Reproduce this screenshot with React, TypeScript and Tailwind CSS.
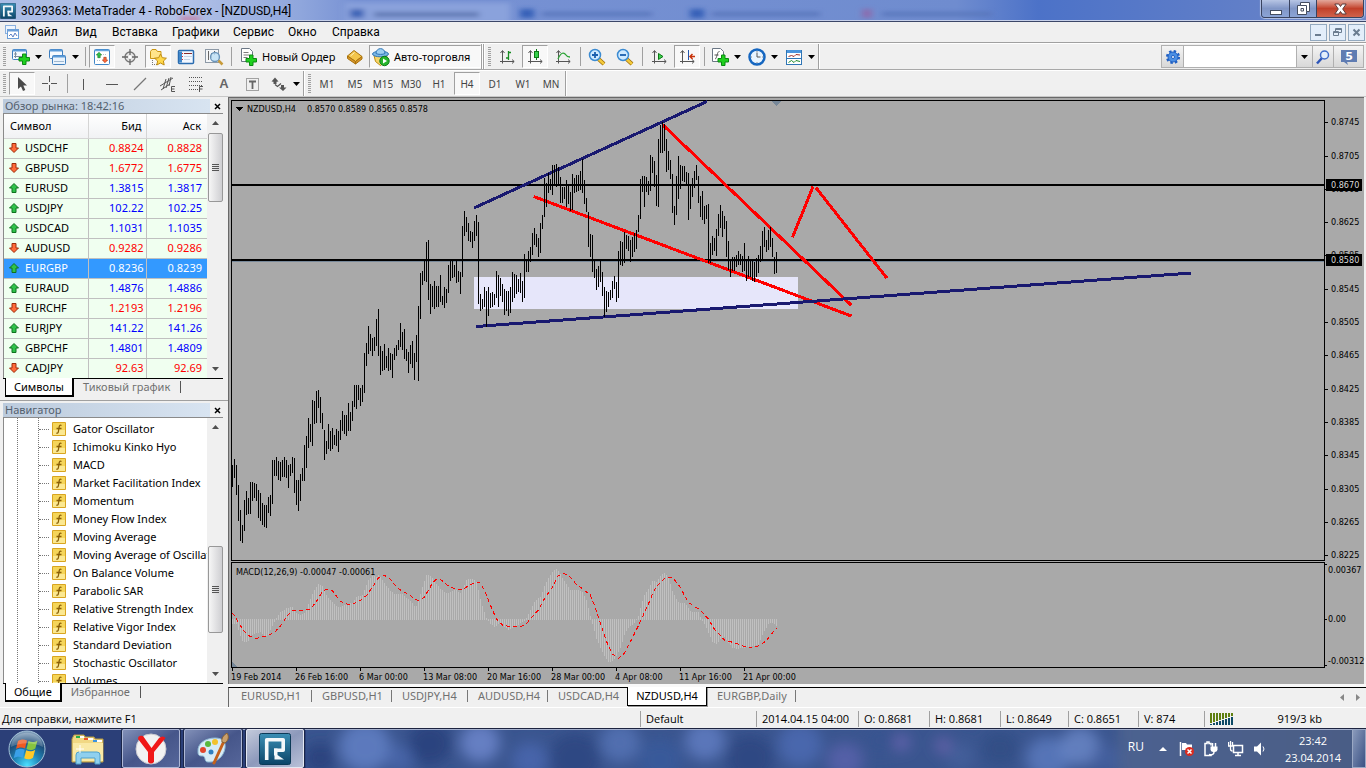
import type { ReactNode } from "react";

/* ---------- market data ---------- */

type Quote = [symbol: string, bid: string, ask: string, up: boolean];

const quotes: Quote[] = [
  ["USDCHF", "0.8824", "0.8828", false],
  ["GBPUSD", "1.6772", "1.6775", false],
  ["EURUSD", "1.3815", "1.3817", true],
  ["USDJPY", "102.22", "102.25", true],
  ["USDCAD", "1.1031", "1.1035", true],
  ["AUDUSD", "0.9282", "0.9286", false],
  ["EURGBP", "0.8236", "0.8239", true],
  ["EURAUD", "1.4876", "1.4886", true],
  ["EURCHF", "1.2193", "1.2196", false],
  ["EURJPY", "141.22", "141.26", true],
  ["GBPCHF", "1.4801", "1.4809", true],
  ["CADJPY", "92.63", "92.69", false],
];

const indicators = [
  "Gator Oscillator", "Ichimoku Kinko Hyo", "MACD", "Market Facilitation Index", "Momentum",
  "Money Flow Index", "Moving Average", "Moving Average of Oscillator", "On Balance Volume",
  "Parabolic SAR", "Relative Strength Index", "Relative Vigor Index", "Standard Deviation",
  "Stochastic Oscillator", "Volumes",
];

/* High-low bars, two pixels apart, in thirds of a pixel below the origin of each run. */
const barRuns = [
  {
    top: 380,
    data:
      "255-320 237-294 255-345 315-422 390-483 435-488 360-453 333-404 354-402 306-402 306-362 308-355 312-362 330-414 339-422 369-435 375-440 375-443 351-399 345-408 240-372 240-288 231-288 243-299 246-303 240-291 231-291 240-294 255-323 252-288 231-279 234-339 300-375 300-392 282-363 264-303 195-303 168-264 114-204 132-186 60-197 63-131 33-129 30-84 51-129 99-147 150-240 183-222 132-207 153-213 144-207 165-195 147-198 153-215 120-180 93-153 105-162 105-168 69-153 96-153 63-123 15-81 15-87 15-60 24-78 15-66",
  },
  {
    top: 95,
    data:
      "773-894 743-813 693-777 717-768 729-783 726-768 672-753 642-783 753-840 768-828 747-825 783-819 759-828 774-825 777-849 759-795 750-783 735-765 684-756 711-765 702-792 762-798 771-834 750-807 738-819 774-854 720-801 633-858 534-671 528-570 498-558 441-561 435-615 567-657 573-636 558-642 573-636 573-636 540-621 603-630 576-639 582-624 510-594 498-558 498-549 510-546 498-564 528-561 531-597 393-546 348-423 366-411 384-438 408-441 411-459 378-438 360-423 381-627 597-648 612-642 576-636 588-696 576-663 594-639 591-636 597-630 528-609 540-636 549-603 567-621 582-660 588-648 588-663 576-654 531-621 537-609 540-597 552-591 534-594 558-621 477-609 498-531 468-531 456-501 414-480 399-450 417-456 429-486 384-474 360-402 249-366 264-336 234-294 252-285 210-300 210-270 207-276 216-273 246-324 276-324 276-312 255-336 270-327 291-348 237-345 249-294 240-291 240-288 228-285 192-294 255-327 309-351 351-456 417-486 420-531 492-549 522-585 513-576 498-561 531-603 576-666 588-651 591-636 585-615 558-609 543-582 561-621 468-609 438-510 441-513 411-504 420-462 423-468 435-501 426-486 414-471 405-462 360-411 252-372 243-291 243-336 246-291 258-300 180-288 186-234 198-276 240-333 132-336 90-174 81-174 87-168 132-231 168-225 195-252 237-354 333-390 243-360 183-312 210-282 213-258 213-261 231-270 234-375 273-342 249-306 228-279 210-255 243-324 303-366 288-375 333-387 330-372 327-504 444-504 423-480 429-468 402-483 357-423 330-399 348-426 363-402 378-486 438-525 492-546 486-528 486-528 480-516 468-510 477-510 483-531 444-528 498-558 483-546 495-546 498-558 501-561 489-546 480-534 453-501 408-492 396-456 435-471 405-465 396-456 429-486 486-537 471-534",
  },
];

const bars = barRuns
  .flatMap((run) =>
    run.data.split(" ").map((pair) => pair.split("-").map((v) => Math.round(run.top + Number(v) / 3))),
  )
  .map(([high, low], i) => ({ x: 232 + i * 2, high, low }));

type Point = [number, number];

const parsePoints = (left: number, top: number, text: string): Point[] =>
  text.split(" ").map((p) => {
    const [x, y] = p.split(":").map(Number);
    return [left + x / 3, top + y / 3];
  });

const histogram: Point[] = [
  ...parsePoints(228, 380, "13:732 25:732 31:753 43:786 55:786 61:783 67:768 79:760 97:757 109:768 121:765 130:740 139:725 145:711 157:696 175:684 193:681 205:700 217:705 229:700 241:668 253:640 265:618 271:609 283:620 295:648 313:668 331:682 349:675 361:672 373:668 385:650 403:645 409:628 421:597 433:588 445:590 451:585 463:600 475:618 487:633 499:642 523:642 535:655 547:663 559:678 565:678 571:660 583:618 595:582 613:594 625:612 637:628 655:640 679:628 697:640 715:597 733:597 745:606 757:663 775:717 787:732 799:741 811:732 829:741 841:750 859:741 877:729 889:723 895:711 907:687 919:663 937:650"),
  ...parsePoints(540, 555, "13:90 25:66 37:50 49:41 61:60 73:78 91:105 109:105 127:110 139:138 151:186 157:210 169:255 181:280 193:305 205:321 217:318 229:300 241:276 253:237 265:216 283:204 295:180 301:153 313:117 325:99 337:75 349:80 361:60 373:54 385:70 397:111 415:144 433:144 451:170 463:172 475:170 481:190 493:207 505:237 517:262 529:267 541:250 553:246 565:264 577:279 589:282 625:276 655:270 667:237 679:216 685:204 697:204 709:213"),
];

const signal: Point[] = [
  ...parsePoints(228, 380, "13:698 25:717 49:755 67:770 85:775 121:766 139:758 157:738 175:712 193:690 229:690 247:688 265:665 283:635 295:628 313:632 337:664 361:674 379:670 397:661 415:647 433:622 451:594 469:586 487:597 505:620 523:635 541:641 559:657 571:661 589:652 613:610 625:598 640:600 661:618 685:628 703:629 727:614 745:605 757:609 769:630 787:675 805:717 823:735 850:741 877:740 895:731 913:710 931:690"),
  ...parsePoints(540, 555, "1:155 13:132 37:97 55:62 73:55 91:67 109:88 127:101 151:120 163:150 181:205 199:258 217:297 235:310 253:295 271:261 301:200 325:147 343:105 361:82 379:66 397:68 415:88 445:141 463:155 481:165 505:192 523:222 553:255 589:265 610:273 637:278 661:271 679:257 697:234 709:220"),
];

const valueAt = (points: Point[], x: number) => {
  const next = points.findIndex((p) => p[0] >= x);
  if (next <= 0) return points[next === 0 ? 0 : points.length - 1][1];
  const [x0, y0] = points[next - 1];
  const [x1, y1] = points[next];
  return y0 + ((y1 - y0) * (x - x0)) / (x1 - x0);
};

const ZERO = 619;
const macdBars = bars.map(({ x }) => {
  const y = Math.round(valueAt(histogram, x));
  return y < ZERO ? { x, y, h: ZERO + 1 - y } : { x, y: ZERO, h: Math.max(1, y - ZERO) };
});

const priceTicks: [string, number][] = [
  ["0.8745", 122], ["0.8705", 156], ["0.8665", 189], ["0.8625", 222], ["0.8585", 255], ["0.8545", 289],
  ["0.8505", 322], ["0.8465", 355], ["0.8425", 389], ["0.8385", 422], ["0.8345", 455], ["0.8305", 489],
  ["0.8265", 522], ["0.8225", 555],
];

const dateTicks: [string, number][] = [
  ["19 Feb 2014", 232], ["26 Feb 16:00", 296], ["6 Mar 00:00", 360], ["13 Mar 08:00", 424],
  ["20 Mar 16:00", 488], ["28 Mar 00:00", 552], ["4 Apr 08:00", 616], ["11 Apr 16:00", 680],
  ["21 Apr 00:00", 744],
];

/* ---------- icons ---------- */

const Svg = ({ size = 20, children }: { size?: number; children: ReactNode }) => (
  <svg width={size} height={size} viewBox={`0 0 ${size} ${size}`} className="shrink-0" aria-hidden="true">
    {children}
  </svg>
);

const Plus = ({ x, y }: { x: number; y: number }) => (
  <path
    transform={`translate(${x} ${y})`}
    d="M4 0.5h3.5v3.5H11v3.5H7.500v3.500H4V7.500H0.500V4H4z"
    fill="#1fd01f"
    stroke="#0a8a12"
  />
);

const NewChartIcon = () => (
  <Svg>
    <rect x="1.500" y="2.500" width="14" height="10" rx="1" fill="#f5faff" stroke="#3f7fbf" />
    <path d="M2 3.500h13" stroke="#5b9bd8" strokeWidth="2" />
    <path d="M4.500 5v6M3 7h3M3 9.500h10" stroke="#7d8ea0" fill="none" />
    <Plus x={7.500} y={6.500} />
  </Svg>
);

const ProfilesIcon = () => (
  <Svg>
    <rect x="1.500" y="2.500" width="13" height="9" rx="1" fill="#f5faff" stroke="#3f7fbf" />
    <path d="M2 3.500h12" stroke="#5b9bd8" strokeWidth="2" />
    <rect x="4.500" y="8.500" width="13" height="9" rx="1" fill="#eaf3fc" stroke="#3f7fbf" />
    <path d="M5 9.500h12" stroke="#5b9bd8" strokeWidth="2" />
    <path d="M6 14.500h10" stroke="#9fb8d0" />
  </Svg>
);

const UpArrow = () => (
  <path d="M5 0.500L9.500 5H7v4.500H3V5H.5z" fill="#2fc24a" stroke="#11711f" />
);
const DownArrow = () => (
  <path d="M5 9.500L9.500 5H7V.5H3V5H.5z" fill="#ff6a3a" stroke="#9c2d0d" />
);

const MarketWatchIcon = () => (
  <Svg>
    <rect x="2.500" y="2.500" width="15" height="15" rx="1" fill="#fff" stroke="#3f86c8" />
    <path d="M3 3.500h14" stroke="#66a6e0" strokeWidth="1.500" />
    <g transform="translate(4 5) scale(.6)"><UpArrow /></g>
    <g transform="translate(10 10) scale(.6)"><DownArrow /></g>
    <path d="M11 7.500h4M5 13.500h4" stroke="#b8c4d0" strokeDasharray="1 1" />
  </Svg>
);

const TargetIcon = () => (
  <Svg>
    <circle cx="10" cy="10" r="5" fill="#e4e4e4" stroke="#777" strokeWidth="1.300" />
    <circle cx="10" cy="10" r="1.500" fill="#fff" />
    <path d="M10 2v6M10 12v6M2 10h6M12 10h6" stroke="#666" strokeWidth="1.300" />
  </Svg>
);

const NavigatorIcon = () => (
  <Svg>
    <path d="M2.500 4.500L4 2.500h4l1.500 2H13v7H2.500z" fill="#ffe58a" stroke="#c99512" />
    <path d="M4.500 13v5M6 17.500h3" stroke="#777" strokeDasharray="1 1" />
    <path d="M12.500 7l1.800 3.700 4.100.5-3 2.800.8 4-3.700-2-3.700 2 .8-4-3-2.800 4.100-.5z" fill="#ffd84a" stroke="#c08c10" />
  </Svg>
);

const TerminalIcon = () => (
  <Svg>
    <rect x="2.500" y="3.500" width="15" height="13" rx="1" fill="#f2f7ff" stroke="#2a6cb0" strokeWidth="1.500" />
    <path d="M3 4.500h3v11H3z" fill="#3f86c8" />
    <path d="M8 6.500h8" stroke="#8a2b2b" />
    <path d="M8 9.500h8M8 12.500h6" stroke="#c5d4e6" />
    <path d="M6.500 6v9" stroke="#d33" strokeDasharray="1 2" />
  </Svg>
);

const TesterIcon = () => (
  <Svg>
    <rect x="1.500" y="2.500" width="13" height="13" fill="#f4f6f8" stroke="#8d99a6" />
    <path d="M4.500 4v9M7.500 6v5M10.500 4v4" stroke="#666" />
    <circle cx="11" cy="10" r="4.500" fill="#bfe0f6" fillOpacity=".85" stroke="#6b95bb" strokeWidth="1.300" />
    <path d="M14.500 13.500l4 4" stroke="#c89b3a" strokeWidth="2.500" />
  </Svg>
);

const OrderIcon = () => (
  <Svg>
    <path d="M2.500 1.500h8l3 3v10h-11z" fill="#fff" stroke="#6b7785" />
    <path d="M4.500 5.500h5M4.500 8h6M4.500 10.500h4" stroke="#7c7c7c" />
    <Plus x={6.500} y={7.500} />
  </Svg>
);

const BookIcon = () => (
  <Svg>
    <path d="M2.500 9L9 3.500l8 6-6.500 5z" fill="#f3c54a" stroke="#a8720c" />
    <path d="M2.500 9v2.500L10.500 17v-2.500zM10.500 14.500V17l6.500-5V9.500z" fill="#d9962a" stroke="#a8720c" />
    <path d="M5.500 9L9.500 5.500" stroke="#fff1bd" />
  </Svg>
);

const AutoTradeIcon = () => (
  <Svg>
    <path d="M3 8.500h13l-1.500 6-5 4-5-4z" fill="#f6d56a" stroke="#c08c10" />
    <ellipse cx="9.500" cy="7" rx="8" ry="2.800" fill="#7cb8e6" stroke="#2f75b5" />
    <path d="M5 6.500C5 0 14 0 14 6.500c-2 1.200-7 1.200-9 0z" fill="#9fd0f2" stroke="#2f75b5" />
    <circle cx="13.500" cy="14" r="4.700" fill="#27b52c" stroke="#0d7a17" />
    <path d="M12 11.500l4 2.500-4 2.500z" fill="#fff" />
  </Svg>
);

const Axes = () => (
  <path d="M5.500 4v12.500M3 14.500h14M3.500 6L5.500 3.500 7.500 6M15 12.500l2.200 2-2.200 2" fill="none" stroke="#555" />
);

const BarChartIcon = () => (
  <Svg>
    <Axes />
    <path d="M11.500 4v9M9 11h2.500M11.500 5.500H14" stroke="#168a20" strokeWidth="1.300" fill="none" />
  </Svg>
);
const CandleIcon = () => (
  <Svg>
    <Axes />
    <path d="M11.500 2v11" stroke="#0a7a14" />
    <rect x="9.500" y="4.500" width="4" height="6" fill="#35d04a" stroke="#0a7a14" />
  </Svg>
);
const LineChartIcon = () => (
  <Svg>
    <Axes />
    <path d="M5 12c3-7 6-7 8-4 1 2 2 2 4 2" stroke="#2ba336" strokeWidth="1.300" fill="none" />
  </Svg>
);
const ScrollIcon = () => (
  <Svg>
    <Axes />
    <path d="M9.500 6.500l4.500 3-4.500 3z" fill="#3fd04f" stroke="#0a7a14" />
  </Svg>
);
const ShiftIcon = () => (
  <Svg>
    <Axes />
    <path d="M11.500 3v10" stroke="#2255aa" />
    <path d="M13 9.500h5M15.500 7L13 9.500l2.500 2.500" stroke="#c8330a" strokeWidth="1.500" fill="none" />
  </Svg>
);

const ZoomIcon = ({ plus }: { plus?: boolean }) => (
  <Svg>
    <path d="M11.500 12l5.500 5" stroke="#9a6a08" strokeWidth="4" />
    <path d="M11.500 12l5.500 5" stroke="#f3c93a" strokeWidth="2.500" />
    <circle cx="8" cy="8" r="5.500" fill="#cfeaff" stroke="#3b8bd2" strokeWidth="1.500" />
    <path d={plus ? "M5 8h6M8 5v6" : "M5 8h6"} stroke="#1a5fae" strokeWidth="1.800" />
  </Svg>
);

const IndicatorIcon = () => (
  <Svg>
    <path d="M2.500 1.500h8l3 3v10h-11z" fill="#fff" stroke="#6b7785" />
    <path d="M5 12c2 0 2-8 4.500-7.500M4.500 8h4" stroke="#555" fill="none" />
    <Plus x={7.500} y={7.500} />
  </Svg>
);

const ClockIcon = () => (
  <Svg>
    <circle cx="10" cy="10" r="7.500" fill="#e8f4ff" stroke="#1566c0" strokeWidth="2.500" />
    <path d="M10 5.500V10h3.500" stroke="#555" fill="none" />
    <path d="M10 4v1M10 15v1M4 10h1M15 10h1" stroke="#888" />
  </Svg>
);

const TemplateIcon = () => (
  <Svg>
    <rect x="2.500" y="3.500" width="15" height="14" fill="#fff" stroke="#2f75b5" />
    <path d="M3 4.500h14" stroke="#4b95dc" strokeWidth="3" />
    <path d="M3 11.500h14" stroke="#2f75b5" />
    <path d="M4.500 9.500l3-1 2.500 1 2-2 4 .5" stroke="#a0302a" fill="none" />
    <path d="M4.500 15.500l3-2 2.500 2 2-2 4 1" stroke="#1f8a2b" fill="none" />
  </Svg>
);

const GearIcon = () => (
  <Svg size={16}>
    <circle cx="8" cy="8" r="5.800" fill="none" stroke="#1e5fc4" strokeWidth="2.500" strokeDasharray="2.400 2.150" />
    <circle cx="8" cy="8" r="5" fill="#4a8fe4" stroke="#1e5fc4" />
    <circle cx="8" cy="8" r="1.500" fill="#fff" stroke="#1e5fc4" />
  </Svg>
);

const SearchIcon = () => (
  <Svg size={16}>
    <path d="M7 9l-5 5.500" stroke="#2d55b8" strokeWidth="2.500" />
    <circle cx="9.500" cy="6" r="4" fill="#e3eefb" stroke="#3f6cc9" strokeWidth="1.500" />
  </Svg>
);

const AppIcon = ({ size }: { size: number }) => (
  <svg width={size} height={size} viewBox="0 0 32 32" className="shrink-0" aria-hidden="true">
    <defs>
      <linearGradient id="appTile" x1="0" y1="0" x2="0" y2="1">
        <stop offset="0" stopColor="#3b8fb5" />
        <stop offset="1" stopColor="#0b4468" />
      </linearGradient>
    </defs>
    <rect x=".5" y=".5" width="31" height="31" rx="2" fill="url(#appTile)" stroke="#0c3a57" />
    <path d="M7.700 27V6.700h16.500v10.600H15" fill="none" stroke="#f4f8fa" strokeWidth="3.600" strokeLinejoin="round" />
    <path d="M15 15.500h3.500V22l6.500 4.500H15.500v-4H15z" fill="#f4f8fa" />
  </svg>
);

const MenuChartIcon = () => (
  <Svg size={16}>
    <rect x="1.500" y="1.500" width="10" height="8" fill="#eef5fd" stroke="#8ab0de" />
    <rect x="3.500" y="5.500" width="11" height="9" fill="#fff" stroke="#6c9fd8" />
    <path d="M4 6.500h10" stroke="#6c9fd8" strokeWidth="2" />
    <path d="M5 12l2-2 2 3 2-4 2 3" stroke="#5c7fc4" fill="none" />
  </Svg>
);

const CursorIcon = () => (
  <Svg><path d="M6 3v12l3-2.500 2 4.500 2.300-1-2-4.500H15z" fill="#4a4a4a" /></Svg>
);
const CrossIcon = () => (
  <Svg><path d="M9.500 2v6M9.500 11v6M2 9.500h6M11 9.500h6" stroke="#555" /></Svg>
);
const VLineIcon = () => <Svg><path d="M9.500 5v11" stroke="#555" /></Svg>;
const HLineIcon = () => <Svg><path d="M4 10.500h12" stroke="#555" /></Svg>;
const DiagIcon = () => <Svg><path d="M4 16L16 4" stroke="#777" strokeWidth="1.300" /></Svg>;
const ChannelIcon = () => (
  <Svg>
    <path d="M2 12L15 4M3 16L12 10M5 15L8 5M8 14l3-10M11 12l2-9" stroke="#555" />
    <path d="M17 12.500h-3.500v5H17M13.500 15h3" stroke="#555" fill="none" />
  </Svg>
);
const FiboIcon = () => (
  <Svg>
    <path d="M3 3.500h14M3 7.500h14M3 11.500h14M3 15.500h9" stroke="#555" strokeDasharray="1 1" />
    <path d="M17 12.500h-3.500V18M13.500 15h3" stroke="#555" fill="none" />
  </Svg>
);
const LabelIcon = () => (
  <Svg>
    <rect x="4.500" y="4.500" width="12" height="12" fill="none" stroke="#555" strokeDasharray="1 1" />
    <path d="M7 7.500h7M10.500 7.500V15" stroke="#666" strokeWidth="1.800" />
  </Svg>
);
const ArrowsIcon = () => (
  <Svg>
    <path d="M2.500 7.500l3.500-4 3.500 4-2 .2v2.300h-3V7.700z" fill="#555" />
    <path d="M6 10.500l2.500 2L12 9.500" stroke="#555" strokeWidth="1.300" fill="none" />
    <path d="M10 13.500h2V11h3v2.500h2.500L14 17z" fill="#555" />
  </Svg>
);

const Caret = () => (
  <svg width="7" height="4" viewBox="0 0 7 4" className="shrink-0" aria-hidden="true"><path d="M0 0h7L3.500 4z" fill="#000" /></svg>
);

const FunctionIcon = () => (
  <Svg size={16}>
    <rect x="1" y="1" width="14" height="14" rx="1" fill="#d9a520" />
    <rect x="2" y="2" width="12" height="12" fill="#f5d559" />
    <path d="M2 9h12v5H2z" fill="#fbe892" />
    <path d="M10.500 4.500C8.500 3.500 8.300 5 8 7L7.400 10.500C7.200 12 6.500 12.500 5.300 12M5.500 7.500h5" stroke="#8a5f08" strokeWidth="1.300" fill="none" />
  </Svg>
);

/* ---------- chrome parts ---------- */

const Grip = () => (
  <span className="ml-[3px] mr-[2px] h-[20px] w-[3px] shrink-0 bg-[repeating-linear-gradient(to_bottom,#a0a0a0_0_1px,transparent_1px_2px)]" />
);
const Separator = () => (
  <span className="flex h-full w-[6px] shrink-0 justify-center py-[3px]"><span className="w-px bg-[#a0a0a0]" /></span>
);
const GroupEnd = () => (
  <span className="h-full w-[2px] shrink-0 border-l border-l-[#a0a0a0] bg-white" />
);

const ToolButton = ({ label, pressed, children }: { label: string; pressed?: boolean; children: ReactNode }) => (
  <button
    type="button"
    aria-label={label}
    className={
      pressed
        ? "mx-px flex h-[23px] w-[26px] shrink-0 items-center justify-center border border-b-white border-l-[#a0a0a0] border-r-white border-t-[#a0a0a0] bg-[#f8f8f8]"
        : "flex h-[23px] w-[28px] shrink-0 items-center justify-center"
    }
  >
    {children}
  </button>
);
const MenuButton = ({ label, children }: { label: string; children: ReactNode }) => (
  <button type="button" aria-label={label} className="flex h-[23px] w-[37px] shrink-0 items-center justify-center gap-1">
    {children}
    <Caret />
  </button>
);

const TitleBar = () => (
  <header className="relative flex h-[22px] shrink-0 items-start overflow-hidden border-b border-[#3c4768] bg-[#4c72c8]">
    <svg className="absolute inset-0 h-full w-full" preserveAspectRatio="none" viewBox="0 0 1366 21" aria-hidden="true">
      <defs>
        <linearGradient id="glass" x1="0" x2="1" y1="0" y2="0">
          <stop offset="0" stopColor="#a9bce6" />
          <stop offset=".13" stopColor="#b4c3e8" />
          <stop offset=".22" stopColor="#8fa6dc" />
          <stop offset=".26" stopColor="#7892d4" />
          <stop offset=".7" stopColor="#6f8ccf" />
          <stop offset=".76" stopColor="#4c72c8" />
          <stop offset="1" stopColor="#6d86c8" />
        </linearGradient>
        <filter id="soft"><feGaussianBlur stdDeviation="3 2" /></filter>
      </defs>
      <rect width="1366" height="21" fill="url(#glass)" />
      <g filter="url(#soft)">
        <rect x="345" y="3" width="165" height="20" fill="#8aa2dc" />
        <rect x="350" y="9" width="14" height="9" fill="#3f66b8" />
        <rect x="374" y="12" width="105" height="5" fill="#6079b4" />
        <rect x="520" y="9" width="14" height="9" fill="#3460b8" />
        <rect x="542" y="12" width="110" height="4" fill="#5876bb" />
        <rect x="690" y="9" width="14" height="9" fill="#3460b8" />
        <rect x="712" y="12" width="108" height="4" fill="#5876bb" />
        <rect x="862" y="9" width="10" height="9" fill="#8a6eb0" />
        <rect x="882" y="12" width="110" height="4" fill="#5876bb" />
        <rect x="180" y="16" width="20" height="6" fill="#c08ab0" />
      </g>
      <rect y="20" width="1366" height="1" fill="#c6d0ea" />
    </svg>
    <div className="relative flex min-w-0 flex-1 items-center gap-[5px] self-center">
      <AppIcon size={16} />
      <h1 className="truncate font-['Roboto',sans-serif] text-[12px] leading-[16px]">3029363: MetaTrader 4 - RoboForex - [NZDUSD,H4]</h1>
    </div>
    <div className="relative mr-[2px] flex h-[18px] shrink-0 overflow-hidden rounded-b-[4px] border border-t-0 border-[#39435f] shadow-[0_0_1px_1px_#ffffff88]">
      <button type="button" aria-label="Свернуть" className="flex w-[28px] items-center justify-center border-r border-[#39435f] bg-linear-to-b from-[#b7c5e4] via-[#8196c6] to-[#8ba4d6]">
        <svg width="12" height="12" aria-hidden="true"><rect x=".5" y="7.500" width="11" height="4" fill="#fff" stroke="#444d60" /></svg>
      </button>
      <button type="button" aria-label="Восстановить" className="flex w-[27px] items-center justify-center border-r border-[#39435f] bg-linear-to-b from-[#b7c5e4] via-[#8196c6] to-[#8ba4d6]">
        <svg width="13" height="13" aria-hidden="true">
          <path d="M3.500.5h9v9h-3v3h-9v-9h3z" fill="#fff" stroke="#444d60" />
          <path d="M3.500 3.500h6v6M4 6.500h2.500V9H4z" fill="none" stroke="#444d60" />
        </svg>
      </button>
      <button type="button" aria-label="Закрыть" className="flex w-[46px] items-center justify-center bg-linear-to-b from-[#e2a79b] via-[#c1402a] to-[#d0624c]">
        <svg width="13" height="12" aria-hidden="true">
          <path d="M.8 1h4l1.700 2.500L8.200 1h4L8.700 6l3.500 5h-4L6.500 8.500 4.800 11h-4l3.500-5z" fill="#fff" stroke="#5a3a3a" />
        </svg>
      </button>
    </div>
  </header>
);

const mdiButton = "flex h-[17px] w-[17px] items-center justify-center border border-[#93a9bf] bg-[#e3eefa]";

const MenuBar = () => (
  <nav className="flex h-[21px] shrink-0 items-center border-b border-[#a0a0a0] pl-[4px] font-['Roboto',sans-serif] text-[12px] leading-[16px]">
    <MenuChartIcon />
    <button type="button" className="w-[46px] pl-[8px] text-left">Файл</button>
    <button type="button" className="w-[37px] pl-[9px] text-left">Вид</button>
    <button type="button" className="w-[60px] pl-[9px] text-left">Вставка</button>
    <button type="button" className="w-[61px] pl-[9px] text-left">Графики</button>
    <button type="button" className="w-[55px] pl-[9px] text-left">Сервис</button>
    <button type="button" className="w-[44px] pl-[9px] text-left">Окно</button>
    <button type="button" className="w-[60px] pl-[9px] text-left">Справка</button>
    <div className="ml-auto flex gap-[2px] pr-px">
      <button type="button" aria-label="Свернуть график" className={mdiButton}>
        <svg width="9" height="9" aria-hidden="true"><path d="M1 7h6" stroke="#6b7d90" strokeWidth="2" /></svg>
      </button>
      <button type="button" aria-label="Восстановить график" className={mdiButton}>
        <svg width="9" height="9" aria-hidden="true"><path d="M2.500 3V.5h6v4H6M2.500 1.500h6M.5 3.500h5v4h-5zM.5 4.500h5" fill="none" stroke="#6b7d90" /></svg>
      </button>
      <button type="button" aria-label="Закрыть график" className={mdiButton}>
        <svg width="9" height="9" aria-hidden="true"><path d="M1.500 1.500l6 6M7.500 1.500l-6 6" stroke="#6b7d90" strokeWidth="2" /></svg>
      </button>
    </div>
  </nav>
);

const StandardToolbar = () => (
  <div role="toolbar" aria-label="Стандартная" className="flex h-[27px] shrink-0 items-center border-b border-b-[#a8a8a8] border-t border-t-white font-['Noto_Sans',sans-serif] text-[11px] leading-[16px]">
    <Grip />
    <MenuButton label="Новый график"><NewChartIcon /></MenuButton>
    <MenuButton label="Профили"><ProfilesIcon /></MenuButton>
    <Separator />
    <ToolButton label="Обзор рынка" pressed><MarketWatchIcon /></ToolButton>
    <ToolButton label="Окно данных"><TargetIcon /></ToolButton>
    <ToolButton label="Навигатор" pressed><NavigatorIcon /></ToolButton>
    <ToolButton label="Терминал"><TerminalIcon /></ToolButton>
    <ToolButton label="Тестер стратегий"><TesterIcon /></ToolButton>
    <Separator />
    <button type="button" className="flex h-[23px] w-[107px] shrink-0 items-center gap-[3px] whitespace-nowrap pl-[5px]">
      <OrderIcon />Новый Ордер
    </button>
    <ToolButton label="MetaEditor"><BookIcon /></ToolButton>
    <button type="button" className="flex h-[23px] w-[112px] shrink-0 items-center gap-[3px] whitespace-nowrap border border-b-white border-l-[#a0a0a0] border-r-white border-t-[#a0a0a0] bg-[#f8f8f8] pl-px">
      <AutoTradeIcon />Авто-торговля
    </button>
    <GroupEnd />
    <GroupEnd />
    <Grip />
    <ToolButton label="Бары"><BarChartIcon /></ToolButton>
    <ToolButton label="Японские свечи" pressed><CandleIcon /></ToolButton>
    <ToolButton label="Линия"><LineChartIcon /></ToolButton>
    <Separator />
    <ToolButton label="Увеличить"><ZoomIcon plus /></ToolButton>
    <ToolButton label="Уменьшить"><ZoomIcon /></ToolButton>
    <Separator />
    <ToolButton label="Автопрокрутка"><ScrollIcon /></ToolButton>
    <ToolButton label="Сдвиг графика" pressed><ShiftIcon /></ToolButton>
    <Separator />
    <MenuButton label="Индикаторы"><IndicatorIcon /></MenuButton>
    <MenuButton label="Периоды"><ClockIcon /></MenuButton>
    <MenuButton label="Шаблоны"><TemplateIcon /></MenuButton>
    <GroupEnd />
    <form className="ml-auto mr-[2px] flex h-[23px] w-[203px] shrink-0 border border-[#b0b0b0] bg-linear-to-b from-[#f4f4f4] to-[#d8d8d8]">
      <button type="button" aria-label="Настройки" className="flex w-[21px] items-center justify-center"><GearIcon /></button>
      <input aria-label="Поиск" className="w-[114px] border-x border-[#b0b0b0] bg-white px-1 outline-none" />
      <button type="button" aria-label="История поиска" className="flex w-[15px] items-center justify-center"><Caret /></button>
      <button type="button" aria-label="Найти" className="flex w-[22px] items-center justify-center border-x border-[#b0b0b0]"><SearchIcon /></button>
      <button type="button" aria-label="5 сообщений" className="flex flex-1 items-center justify-center">
        <svg width="18" height="18" aria-hidden="true">
          <path d="M1 2h16v12H7l1 3-4-3H1z" fill="#5f7cb2" />
          <text x="9" y="12" textAnchor="middle" fill="#fff" className="font-['DejaVu_Sans'] text-[11px] font-bold">5</text>
        </svg>
      </button>
    </form>
  </div>
);

const periods = ["M1", "M5", "M15", "M30", "H1", "H4", "D1", "W1", "MN"];

const LineToolbar = () => (
  <div role="toolbar" aria-label="Графические инструменты" className="flex h-[27px] shrink-0 items-center border-b border-b-[#c8c8c8] border-t border-t-white font-['Noto_Sans',sans-serif] text-[10px] leading-[14px] text-[#444]">
    <Grip />
    <ToolButton label="Курсор" pressed><CursorIcon /></ToolButton>
    <ToolButton label="Перекрестие"><CrossIcon /></ToolButton>
    <Separator />
    <ToolButton label="Вертикальная линия"><VLineIcon /></ToolButton>
    <ToolButton label="Горизонтальная линия"><HLineIcon /></ToolButton>
    <ToolButton label="Трендовая линия"><DiagIcon /></ToolButton>
    <ToolButton label="Канал"><ChannelIcon /></ToolButton>
    <ToolButton label="Фибоначчи"><FiboIcon /></ToolButton>
    <button type="button" className="w-[28px] shrink-0 font-['Liberation_Sans',sans-serif] text-[13px] font-bold leading-[18px] text-[#666]">A</button>
    <ToolButton label="Текстовая метка"><LabelIcon /></ToolButton>
    <MenuButton label="Стрелки"><ArrowsIcon /></MenuButton>
    <GroupEnd />
    <Grip />
    {periods.map((p) => (
      <ToolButton key={p} label={p} pressed={p === "H4"}>{p}</ToolButton>
    ))}
    <GroupEnd />
  </div>
);

/* ---------- side panels ---------- */

const PanelTitle = ({ children }: { children: ReactNode }) => (
  <div className="flex h-[14px] shrink-0 items-center">
    <h2 className="flex-1 bg-linear-to-r from-[#bccbdd] to-[#d8e4f1] pl-[2px] text-[11px] leading-[14px] text-[#53606e]">{children}</h2>
    <button type="button" aria-label="Закрыть панель" className="flex w-[13px] justify-end pr-[2px]">
      <svg width="7" height="7" aria-hidden="true"><path d="M1 1l5 5M6 1L1 6" stroke="#000" strokeWidth="1.500" /></svg>
    </button>
  </div>
);

const ScrollBar = ({ before, thumb }: { before: string; thumb: string }) => (
  <div className="flex w-[16px] shrink-0 flex-col items-center bg-[#f0f0f0]">
    <svg width="7" height="16" className="shrink-0" aria-hidden="true"><path d="M0 11h7L3.500 7z" fill="#505050" /></svg>
    <span className={before} />
    <span className={`flex w-[15px] shrink-0 flex-col items-center justify-center gap-px rounded-[2px] border border-[#989898] bg-linear-to-r from-[#f6f6f6] to-[#cfcfd2] ${thumb}`}>
      <span className="h-px w-[7px] bg-[#555]" />
      <span className="h-px w-[7px] bg-[#555]" />
      <span className="h-px w-[7px] bg-[#555]" />
      <span className="h-px w-[7px] bg-[#555]" />
    </span>
    <svg width="7" height="16" className="mt-auto shrink-0" aria-hidden="true"><path d="M0 5h7L3.500 9z" fill="#505050" /></svg>
  </div>
);

const PanelTabs = ({ active, other }: { active: string; other: string }) => (
  <div className="flex h-[19px] shrink-0 items-start border-t border-black bg-[#f0f0f0] pl-[2px] text-[11px] leading-[16px]">
    <button type="button" className="-mt-px h-[19px] shrink-0 border border-t-0 border-b-2 border-r-2 border-black bg-white px-[8px]">{active}</button>
    <button type="button" className="flex shrink-0 items-center gap-[10px] whitespace-nowrap pl-[9px] text-[#707070]">
      {other}
      <span className="h-[12px] w-px bg-[#555]" />
    </button>
  </div>
);

const MarketWatch = () => (
  <section className="flex flex-col pl-[3px] pr-[5px] pt-[2px]">
    <PanelTitle>Обзор рынка: 18:42:16</PanelTitle>
    <div className="flex h-[265px] overflow-hidden border-l border-t border-[#8a8a8a] bg-white">
      <table className="min-w-0 flex-1 table-fixed border-collapse self-start text-[11px] leading-[18px]">
        <colgroup><col /><col className="w-[58px]" /><col className="w-[61px]" /></colgroup>
        <thead>
          <tr className="h-[24px] bg-linear-to-b from-white to-[#f1f2f4]">
            <th className="border-b border-r border-[#d5d5d5] pl-[6px] text-left font-normal">Символ</th>
            <th className="border-b border-r border-[#d5d5d5] pr-[4px] text-right font-normal">Бид</th>
            <th className="border-b border-[#d5d5d5] pr-[6px] text-right font-normal">Аск</th>
          </tr>
        </thead>
        <tbody>
          {quotes.map(([symbol, bid, ask, up]) => {
            const selected = symbol === "EURGBP";
            const tone = selected ? "text-white" : up ? "text-[#0000ff]" : "text-[#ff0000]";
            return (
              <tr key={symbol} className={selected ? "h-[20px] bg-[#3399ff] text-white" : "h-[20px] bg-[#f0fff0]"}>
                <td className="border-b border-r border-[#c0c0c0] p-0">
                  <span className="flex items-center gap-[6px] pl-[5px]">
                    <Svg size={10}>{up ? <UpArrow /> : <DownArrow />}</Svg>
                    {symbol}
                  </span>
                </td>
                <td className={`border-b border-r border-[#c0c0c0] p-0 pr-[2px] text-right ${tone}`}>{bid}</td>
                <td className={`border-b border-[#c0c0c0] p-0 pr-[5px] text-right ${tone}`}>{ask}</td>
              </tr>
            );
          })}
        </tbody>
      </table>
      <ScrollBar before="h-[3px] shrink-0" thumb="h-[69px]" />
    </div>
    <PanelTabs active="Символы" other="Тиковый график" />
  </section>
);

const Navigator = () => (
  <section className="flex min-h-0 flex-1 flex-col border-t border-[#a0a0a0] pl-[3px] pr-[5px] pt-[2px]">
    <PanelTitle>Навигатор</PanelTitle>
    <div className="flex h-[266px] overflow-hidden border-l border-t border-[#8a8a8a] bg-white">
      <div className="flex min-w-0 flex-1 overflow-hidden pl-[13px]">
        <span className="w-[21px] shrink-0 border-l border-dotted border-[#777]" />
        <ul className="min-w-0 flex-1 border-l border-dotted border-[#777] pt-[2px]">
          {indicators.map((name) => (
            <li key={name} className="flex h-[18px] items-center whitespace-nowrap text-[11px] leading-[18px]">
              <span className="mr-[2px] w-[10px] shrink-0 border-t border-dotted border-[#777]" />
              <FunctionIcon />
              <span className="pl-[6px]">{name}</span>
            </li>
          ))}
        </ul>
      </div>
      <ScrollBar before="h-[112px] shrink-0" thumb="h-[87px]" />
    </div>
    <PanelTabs active="Общие" other="Избранное" />
  </section>
);

/* ---------- chart ---------- */

const Plot = () => (
  <svg className="h-[586px] min-w-0 flex-1" shapeRendering="crispEdges" role="img" aria-label="NZDUSD, H4">
    <path d="M2.500 2V462.500M2.500 464V569.500" stroke="#000" />
    <line x1="2" x2="100%" y1="2.500" y2="2.500" stroke="#000" />
    <line x1="2" x2="100%" y1="462.500" y2="462.500" stroke="#000" />
    <line x1="2" x2="100%" y1="464.500" y2="464.500" stroke="#000" />
    <line x1="2" x2="100%" y1="569.500" y2="569.500" stroke="#000" />
    <rect x="245" y="179" width="324" height="32" fill="#e6e6fa" />
    <rect x="3" y="163" width="100%" height="1" fill="#778899" />
    <rect x="3" y="86" width="100%" height="2" fill="#000" />
    <rect x="3" y="161" width="100%" height="2" fill="#000" />
    <g transform="translate(-229 -98)">
      <path d="M771 101h10l-5 5z" fill="#778899" />
      <path d="M232 662v5h6z" fill="#778899" />
      <g stroke="#ff0000" strokeWidth="3" strokeLinecap="square">
        <path d="M535 197L850 315.500" />
        <path d="M664 126L850 304" />
        <path d="M793 236L812.500 188" />
        <path d="M817 189L886 277" />
      </g>
      <g stroke="#191970" strokeWidth="3">
        <path d="M474 208L707 101.500" />
        <path d="M476 326.500L1191 273" />
      </g>
      {bars.map((b) => (
        <rect key={b.x} x={b.x} y={b.high} width="1" height={b.low - b.high} fill="#000" />
      ))}
      {macdBars.map((b) => (
        <rect key={b.x} x={b.x} y={b.y} width="1" height={b.h} fill="#c0c0c0" />
      ))}
      <polyline points={signal.map((p) => p.join(",")).join(" ")} fill="none" stroke="#ff0000" strokeDasharray="4 3" />
      <path d="M235 107h8l-4 4z" fill="#000" />
      <g className="font-['DejaVu_Sans_Condensed','Noto_Sans',sans-serif] text-[9px]" shapeRendering="auto">
        <text x="247" y="112">NZDUSD,H4</text>
        <text x="307" y="112">0.8570 0.8589 0.8565 0.8578</text>
        <text x="236" y="575">MACD(12,26,9) -0.00047 -0.00061</text>
        {dateTicks.map(([label, x]) => (
          <g key={label}>
            <rect x={x} y="668" width="1" height="3" />
            <text x={x - 1} y="680">{label}</text>
          </g>
        ))}
      </g>
    </g>
  </svg>
);

const PriceTag = ({ y, label }: { y: number; label: string }) => (
  <>
    <rect x="2" y={y - 6} width="36" height="12" fill="#000" />
    <text x="7" y={y + 3} fill="#d8d8d8">{label}</text>
  </>
);

const PriceAxis = () => (
  <svg className="h-[586px] w-[40px] shrink-0 font-['DejaVu_Sans_Condensed','Noto_Sans',sans-serif] text-[9px]" role="img" aria-label="Шкала цен">
    <g shapeRendering="crispEdges">
      <path d="M.5 2V462.500M.5 464V569.500" stroke="#000" />
      {priceTicks.map(([label, y]) => <rect key={label} x="1" y={y - 98} width="3" height="1" />)}
      <path d="M1 466.500h2M1 521.500h2M1 567.500h2" stroke="#000" />
    </g>
    {priceTicks.map(([label, y]) => <text key={label} x="7" y={y - 95}>{label}</text>)}
    <PriceTag y={87} label="0.8670" />
    <PriceTag y={162} label="0.8580" />
    <text x="4" y="475">0.00367</text>
    <text x="4" y="524">0.00</text>
    <text x="4" y="566">-0.00312</text>
  </svg>
);

const idleTab = "flex h-[16px] items-center justify-between whitespace-nowrap pl-[10px] text-[#707070]";

const chartTabs: [string, string][] = [
  ["EURUSD,H1", "w-[81px]"], ["GBPUSD,H1", "w-[80px]"], ["USDJPY,H4", "w-[76px]"], ["AUDUSD,H4", "w-[80px]"],
  ["USDCAD,H4", "w-[79px]"], ["NZDUSD,H4", "w-[80px]"], ["EURGBP,Daily", "w-[89px]"],
];

const ChartArea = () => (
  <section className="flex min-w-0 flex-1 flex-col">
    <div className="mr-[2px] flex h-[587px] border-l border-t border-[#696969] bg-[#a9a9a9]">
      <Plot />
      <PriceAxis />
    </div>
    <div className="h-[3px] shrink-0 bg-[#f8f8f8]" />
    <div className="flex min-h-[20px] flex-1 items-start border-l border-t border-black border-l-[#696969] pl-[2px] text-[11px] leading-[16px]">
      {chartTabs.map(([label, width]) =>
        label === "NZDUSD,H4" ? (
          <button key={label} type="button" className={`-mt-px flex h-[19px] items-center justify-center whitespace-nowrap border border-t-0 border-black bg-white shadow-[1px_1px_0_#999] ${width}`}>{label}</button>
        ) : (
          <button key={label} type="button" className={`${idleTab} ${width}`}>
            {label}
            {label !== "USDCAD,H4" && <span className="h-[12px] w-px shrink-0 bg-[#777]" />}
          </button>
        ),
      )}
      <div className="ml-auto flex gap-[12px] self-center pr-[6px]">
        <svg width="4" height="7" aria-hidden="true"><path d="M4 0v7L0 3.500z" fill="#888" /></svg>
        <svg width="4" height="7" aria-hidden="true"><path d="M0 0v7l4-3.500z" fill="#888" /></svg>
      </div>
    </div>
  </section>
);

/* ---------- status bar and taskbar ---------- */

const statusCells: [string, string][] = [
  ["Default", "w-[116px]"], ["2014.04.15 04:00", "w-[102px]"], ["O: 0.8681", "w-[71px]"], ["H: 0.8681", "w-[71px]"],
  ["L: 0.8649", "w-[68px]"], ["C: 0.8651", "w-[70px]"], ["V: 874", "w-[66px]"],
];

const StatusBar = () => (
  <footer className="flex h-[21px] shrink-0 items-center border-t border-white pt-[2px] font-['Open_Sans',sans-serif] text-[11px] leading-[16px]">
    <span className="min-w-0 flex-1 truncate pl-[2px]">Для справки, нажмите F1</span>
    {statusCells.map(([text, width]) => (
      <span key={text} className={`shrink-0 whitespace-nowrap border-l border-[#a0a0a0] pl-[5px] ${width}`}>{text}</span>
    ))}
    <span className="flex w-[162px] shrink-0 items-center border-l border-[#a0a0a0] pl-[5px]">
      <svg width="24" height="13" shapeRendering="crispEdges" aria-hidden="true">
        {Array.from({ length: 8 }, (_, i) => (
          <g key={i}>
            <rect x={i * 3} y="0" width="2" height={10 - i} fill="#5f7f10" />
            <rect x={i * 3} y={11 - i} width="2" height={i + 1} fill="#0d4a66" />
          </g>
        ))}
      </svg>
      <span className="flex-1 pr-[44px] text-right">919/3 kb</span>
    </span>
  </footer>
);

const taskButton = "flex w-[58px] items-center justify-center rounded-[2px] border border-[#aeb8d6] bg-linear-to-br from-[#8290b8] via-[#46568a] to-[#56669a] shadow-[0_0_0_1px_#1a2548]";
const activeTask = "flex w-[58px] items-center justify-center rounded-[2px] border border-[#e4e8f2] bg-linear-to-br from-[#c3cadb] via-[#8d99bb] to-[#b9c1d8] shadow-[0_0_0_1px_#1a2548]";

const blots: [number, number, number, string][] = [
  [365, 18, 26, "#6482c8"], [320, 30, 16, "#27407a"], [400, 30, 14, "#4a68ac"], [430, 15, 22, "#27407a"],
  [480, 14, 20, "#6f8ad0"], [530, 32, 18, "#4a68b0"], [575, 30, 26, "#2a4680"], [620, 14, 20, "#5674b8"],
  [660, 32, 22, "#3a5a9c"], [705, 12, 20, "#627ec4"], [750, 30, 24, "#2a4480"], [800, 16, 22, "#4e6cb4"],
  [845, 32, 18, "#5a62ac"], [880, 12, 16, "#3a5490"], [902, 14, 8, "#6f68b8"], [943, 17, 8, "#7064b0"],
  [960, 28, 14, "#46609c"], [1000, 20, 18, "#304c84"], [1048, 30, 22, "#5c7cc0"], [1080, 18, 20, "#6a88c8"],
  [1106, 30, 14, "#4660a0"],
];

const Taskbar = () => (
  <nav className="relative flex h-[40px] shrink-0 items-stretch overflow-hidden border-t border-[#1d2440] bg-[#2d4580]">
    <svg className="absolute inset-0 h-full w-full" preserveAspectRatio="none" viewBox="0 0 1366 40" aria-hidden="true">
      <defs>
        <filter id="haze"><feGaussianBlur stdDeviation="7" /></filter>
        <linearGradient id="tray" x1="0" x2="1"><stop offset="0" stopColor="#4c6290" /><stop offset="1" stopColor="#4a5c84" /></linearGradient>
      </defs>
      <rect width="1366" height="40" fill="#3a558f" />
      <rect width="306" height="40" fill="#2b3f78" />
      <g filter="url(#haze)">
        {blots.map(([x, y, r, fill]) => <circle key={x} cx={x} cy={y} r={r} fill={fill} fillOpacity=".8" />)}
        <rect x="1118" y="-20" width="270" height="80" fill="url(#tray)" />
      </g>
      <rect width="1366" height="1" fill="#a7b3cf" />
    </svg>
    <button type="button" aria-label="Пуск" className="relative flex w-[54px] shrink-0 items-center justify-center">
      <svg width="38" height="38" viewBox="0 0 38 38" aria-hidden="true">
        <defs>
          <radialGradient id="orb" cx=".5" cy=".95" r=".9">
            <stop offset="0" stopColor="#4be0ff" /><stop offset=".4" stopColor="#1f86b8" /><stop offset=".75" stopColor="#1c4b78" /><stop offset="1" stopColor="#7d9bb8" />
          </radialGradient>
        </defs>
        <circle cx="19" cy="19" r="18" fill="url(#orb)" stroke="#a5c3d8" />
        <path d="M10 11c3-2 6-2 9-.5l-2 8c-3-1.500-6-1.500-9 .5z" fill="#ef5a22" />
        <path d="M20.500 11c3 1.500 6 1.500 9-.5l-2.200 8c-3 2-6 2-8.800.5z" fill="#86c440" />
        <path d="M7.700 20.200c3-2 6-2 9-.5l-2 8c-3-1.500-6-1.500-9 .5z" fill="#3aa0e8" />
        <path d="M18.200 20.200c3 1.500 6 1.500 9-.5l-2.200 8c-3 2-6 2-8.800.5z" fill="#ffc928" />
        <path d="M3 17C4 -2 34 -2 35 17c-10-5-22-5-32 0z" fill="#fff" fillOpacity=".22" />
      </svg>
    </button>
    <button type="button" aria-label="Проводник" className="relative flex w-[68px] shrink-0 items-center justify-center">
      <svg width="34" height="32" viewBox="0 0 34 32" aria-hidden="true">
        <path d="M1 6l2-4h10l1 2h9l1 2h8v23H1z" fill="#f1d884" stroke="#b79a42" />
        <path d="M5 3h4v2H5z" fill="#28b04a" /><path d="M13 5h4v2h-4z" fill="#e8502e" /><path d="M22 7h4v2h-4z" fill="#3b94de" />
        <path d="M9 3h4v2H9zM17 5h5v2h-5zM26 7h5v2h-5z" fill="#fff" />
        <path d="M2 10h30v18H2z" fill="#f9e9a6" />
        <path d="M5 31v-9q0-3 3-3h18q3 0 3 3v9h-5v-6H10v6z" fill="#8fd0ee" stroke="#4fa1cc" />
        <path d="M9 12v8M5 16h8" stroke="#fff" />
      </svg>
    </button>
    <div className="relative flex flex-1 gap-[4px]">
      <button type="button" aria-label="Яндекс.Браузер" className={taskButton}>
        <svg width="32" height="32" viewBox="0 0 32 32" aria-hidden="true">
          <circle cx="16" cy="16" r="15" fill="#f2f2f2" stroke="#c9c9cf" />
          <path d="M3 6q0-4 5-3l8.500 12L24 5q4-3 6.500 0L19 19v10q-3 3-6 0V19z" fill="#f01818" />
        </svg>
      </button>
      <button type="button" aria-label="Paint" className={taskButton}>
        <svg width="34" height="32" viewBox="0 0 34 32" aria-hidden="true">
          <path d="M2 19C1 10 10 5 19 5c8 0 11 4 10 10-1 8-8 15-17 14-4 0-2-5-5-6-3 0-5 0-5-4z" fill="#d7ebf6" stroke="#8db8d2" />
          <circle cx="7" cy="17" r="3" fill="#e2452c" /><circle cx="12" cy="11" r="3" fill="#5ab83c" />
          <circle cx="19" cy="9" r="3" fill="#f3c22c" /><circle cx="15" cy="19" r="2.500" fill="#2f7fc0" />
          <path d="M18 30L28 8" stroke="#c4611c" strokeWidth="3" strokeLinecap="round" />
          <path d="M26 9c-1-4 2-7 5-9 2 3 2 7-2 10z" fill="#c9a06c" stroke="#8a6230" />
        </svg>
      </button>
      <button type="button" aria-label="MetaTrader 4" className={activeTask}><AppIcon size={32} /></button>
    </div>
    <div className="relative flex shrink-0 items-center font-['Open_Sans',sans-serif] text-[12px] leading-[17px] text-white">
      <span className="mb-[4px] mr-[15px]">RU</span>
      <svg width="8" height="4" className="mr-[12px]" aria-hidden="true"><path d="M0 4h8L4 0z" fill="#fff" /></svg>
      <svg width="16" height="16" className="mr-[8px]" aria-hidden="true">
        <path d="M1.500 1v14" stroke="#fff" strokeWidth="1.500" /><path d="M3 2h4l1 1.500h5V10H8L7 9H3z" fill="#fff" />
        <circle cx="10.500" cy="10.500" r="4.500" fill="#dc2b1e" /><path d="M8.500 8.500l4 4M12.500 8.500l-4 4" stroke="#fff" strokeWidth="1.500" />
      </svg>
      <svg width="16" height="16" className="mr-[9px]" aria-hidden="true">
        <path d="M8 4.500V2.500H6V1H4v1.500H2v12h6V13" fill="none" stroke="#fff" strokeWidth="1.500" />
        <path d="M9.500 2v4M12.500 2v4" stroke="#fff" strokeWidth="1.500" />
        <path d="M7.500 5.500h7v3q0 2-2.500 2.500h-2q-2.500-.5-2.500-2.500z" fill="#fff" />
        <path d="M11 11q0 3.500-5 2.500" fill="none" stroke="#fff" strokeWidth="1.500" />
      </svg>
      <svg width="16" height="16" className="mr-[9px]" aria-hidden="true">
        <path d="M5.500 4.500h9v7h-9z" fill="none" stroke="#fff" strokeWidth="1.500" /><path d="M7 14.500h6M10 12v2" stroke="#fff" strokeWidth="1.500" />
        <path d="M.5 1v4h4V1M2.500 0v8q0 2 2 2" fill="none" stroke="#fff" strokeWidth="1.300" />
      </svg>
      <svg width="16" height="16" className="mr-[17px]" aria-hidden="true">
        <path d="M1 5.500h3L8 1.500v13l-4-4H1z" fill="#fff" /><path d="M10 5.500q2 2.500 0 5" stroke="#fff" fill="none" />
      </svg>
      <time className="mr-[12px] flex w-[54px] flex-col items-center whitespace-nowrap text-[11px]">
        <span>23:42</span>
        <span>23.04.2014</span>
      </time>
      <button type="button" aria-label="Показать рабочий стол" className="h-full w-[14px] border border-[#9aa8c4] bg-linear-to-br from-[#8a9abb] to-[#3c5284]" />
    </div>
  </nav>
);

export default function App() {
  return (
    <div className="flex min-h-screen flex-col bg-[#f0f0f0] text-black">
      <TitleBar />
      <MenuBar />
      <StandardToolbar />
      <LineToolbar />
      <main className="flex flex-1 font-['Noto_Sans',sans-serif]">
        <aside className="flex w-[228px] shrink-0 flex-col gap-[3px]">
          <MarketWatch />
          <Navigator />
        </aside>
        <ChartArea />
      </main>
      <StatusBar />
      <Taskbar />
    </div>
  );
}
